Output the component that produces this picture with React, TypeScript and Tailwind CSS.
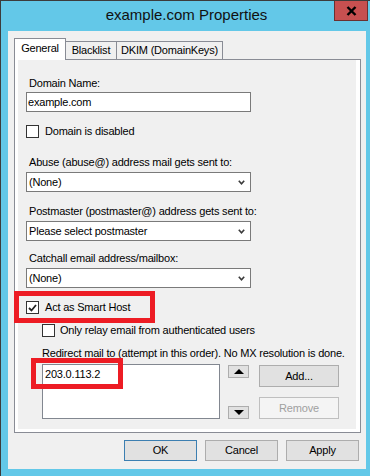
function CheckBox({ checked = false }: { checked?: boolean }) {
  return (
    <div className="flex h-[13px] w-[13px] shrink-0 items-center justify-center border border-[#333] bg-white">
      {checked && (
        <svg width="9" height="8" viewBox="0 0 9 8">
          <path d="M1 4 L3.5 6.5 L8 1" fill="none" stroke="#222" strokeWidth="1.8" />
        </svg>
      )}
    </div>
  );
}

function Select({ value }: { value: string }) {
  return (
    <div className="ml-[8px] mt-[2px] flex h-[20px] w-[225px] items-center justify-between border border-[#7a7a7a] bg-white pl-[2px] pr-[5px]">
      <span>{value}</span>
      <svg width="7" height="5" viewBox="0 0 7 5">
        <path d="M0.8 0.8 L3.5 3.8 L6.2 0.8" fill="none" stroke="#3a3a3a" strokeWidth="1.6" />
      </svg>
    </div>
  );
}

function Label({ text, className }: { text: string; className: string }) {
  return <div className={`h-[15px] leading-[15px] ${className}`}>{text}</div>;
}

function Arrow({ up }: { up?: boolean }) {
  return (
    <div className="flex h-[13px] w-[21px] items-center justify-center border border-[#adadad] bg-[#e1e1e1]">
      <svg width="10" height="5" viewBox="0 0 10 5">
        <path d={up ? "M0 5 L5 0 L10 5 Z" : "M0 0 L10 0 L5 5 Z"} fill="#000" />
      </svg>
    </div>
  );
}

export default function App() {
  return (
    <div
      className="relative h-[476px] w-[370px] overflow-hidden border-l border-t border-[#3c3c3c] bg-[#63c8e8] text-[11px] tracking-[-0.2px] text-black"
      style={{ fontFamily: '"Liberation Sans", Arial, sans-serif' }}
    >
      {/* Title bar */}
      <div className="flex h-[30px] items-center justify-center pb-[2px] pl-[2px] text-[15px] tracking-normal text-[#111]">
        example.com Properties
      </div>
      <div className="absolute right-[2px] top-[-1px] flex h-[21px] w-[34px] items-center justify-center border border-[#6b3030] bg-[#c75050]">
        <svg width="11" height="10" viewBox="0 0 11 10">
          <path d="M1.5 1 L9.5 9 M9.5 1 L1.5 9" stroke="#000" strokeWidth="2.4" />
        </svg>
      </div>

      {/* Client area */}
      <div className="ml-[7px] flex h-[438px] w-[358px] flex-col bg-[#f0f0f0] pt-[7px]">
        {/* Tabs */}
        <div className="ml-[6px] flex h-[21px] items-end">
          <div className="relative z-10 -mb-px flex h-[22px] w-[52px] items-center justify-center border border-b-0 border-[#898c95] bg-white pb-[2px]">
            General
          </div>
          <div className="flex h-[18px] w-[51px] items-center justify-center border border-b-0 border-l-0 border-[#898c95] bg-[#f0f0f0]">
            Blacklist
          </div>
          <div className="flex h-[18px] w-[106px] items-center justify-center border border-b-0 border-l-0 border-[#898c95] bg-[#f0f0f0]">
            DKIM (DomainKeys)
          </div>
        </div>

        {/* Tab panel */}
        <div className="ml-[6px] h-[374px] w-[347px] border border-[#898c95] bg-white pb-[3px] pl-[3px] pr-[4px]">
          <div className="relative flex h-full flex-col bg-[#f0f0f0]">
            <Label text="Domain Name:" className="ml-[11px] mt-[16px]" />
            <div className="ml-[8px] mt-[1px] flex h-[20px] w-[225px] items-center border border-[#7a7a7a] bg-white pl-[1px]">
              example.com
            </div>

            <div className="ml-[8px] mt-[13px] flex h-[13px] items-center gap-[6px]">
              <CheckBox />
              <span>Domain is disabled</span>
            </div>

            <Label text="Abuse (abuse@) address mail gets sent to:" className="ml-[11px] mt-[17px]" />
            <Select value="(None)" />

            <Label text="Postmaster (postmaster@) address gets sent to:" className="ml-[11px] mt-[12px]" />
            <Select value="Please select postmaster" />

            <Label text="Catchall email address/mailbox:" className="ml-[11px] mt-[10px]" />
            <Select value="(None)" />

            <div className="ml-[8px] mt-[13px] flex h-[13px] items-center gap-[6px]">
              <CheckBox checked />
              <span>Act as Smart Host</span>
            </div>

            <div className="ml-[24px] mt-[10px] flex h-[13px] items-center gap-[5px]">
              <CheckBox />
              <span>Only relay email from authenticated users</span>
            </div>

            <Label
              text="Redirect mail to (attempt in this order). No MX resolution is done."
              className="ml-[24px] mt-[9px]"
            />

            <div className="ml-[24px] mt-[3px] flex">
              <div className="h-[55px] w-[178px] border border-[#828790] bg-white pl-[2px] pt-[2px] leading-[15px]">
                203.0.113.2
              </div>
              <div className="ml-[8px] flex h-[55px] flex-col justify-between pt-[1px]">
                <Arrow up />
                <Arrow />
              </div>
              <div className="ml-[10px] flex flex-col gap-[10px] pt-[1px]">
                <div className="flex h-[22px] w-[80px] items-center justify-center border border-[#adadad] bg-[#e1e1e1]">
                  Add...
                </div>
                <div className="flex h-[22px] w-[80px] items-center justify-center border border-[#bfbfbf] bg-[#f4f4f4] text-[#a0a0a0]">
                  Remove
                </div>
              </div>
            </div>

            {/* Annotation boxes */}
            <div className="absolute left-[-4px] top-[231px] h-[32px] w-[141px] border-[5px] border-[#ed1c24]" />
            <div className="absolute left-[13px] top-[298px] h-[31px] w-[92px] border-[5px] border-[#ed1c24]" />
          </div>
        </div>

        {/* Dialog buttons */}
        <div className="mt-[7px] flex justify-end gap-[8px] pr-[7px]">
          <div className="flex h-[21px] w-[73px] items-center justify-center border border-[#3c7fb1] bg-[#e1e1e1]">
            OK
          </div>
          <div className="flex h-[21px] w-[73px] items-center justify-center border border-[#adadad] bg-[#e1e1e1]">
            Cancel
          </div>
          <div className="flex h-[21px] w-[73px] items-center justify-center border border-[#adadad] bg-[#e1e1e1]">
            Apply
          </div>
        </div>
      </div>
    </div>
  );
}
